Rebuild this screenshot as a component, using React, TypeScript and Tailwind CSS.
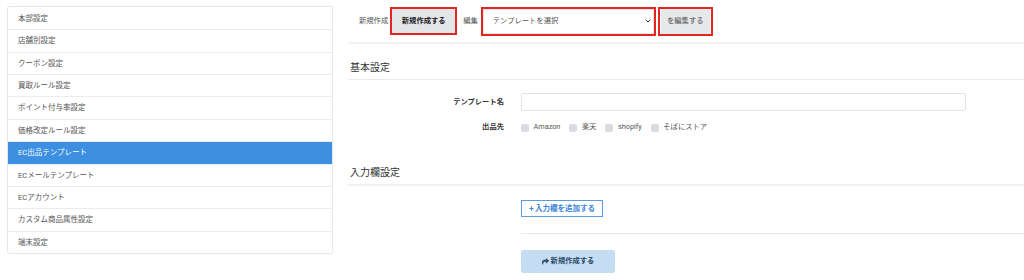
import React from 'react';
import { FaPlus, FaShare } from 'react-icons/fa';
import { ChevronDown } from 'lucide-react';

const menuItems = [
  '本部設定',
  '店舗別設定',
  'クーポン設定',
  '買取ルール設定',
  'ポイント付与率設定',
  '価格改定ルール設定',
  'EC出品テンプレート',
  'ECメールテンプレート',
  'ECアカウント',
  'カスタム商品属性設定',
  '端末設定',
];

const shops = ['Amazon', '楽天', 'shopify', 'そばにストア'];

export default function App() {
  return (
    <div className="flex w-[1024px] h-[280px] overflow-hidden bg-white font-['Roboto','Noto_Sans_CJK_JP',sans-serif] text-[#444]">
      {/* Settings menu */}
      <aside className="ml-[7px] mt-[6px] w-[326px] self-start border border-[#e6e8ec] rounded-[2px] overflow-hidden">
        {menuItems.map((item, idx) => (
          <div
            key={item}
            className={
              (idx > 0 ? 'border-t border-[#e9ebee] ' : '') +
              (item === 'EC出品テンプレート'
                ? 'bg-[#3c8fe1] text-white '
                : 'text-[#555] ') +
              'h-[22.36px] flex items-center pl-[10px] text-[7.5px]'
            }
          >
            {item}
          </div>
        ))}
      </aside>

      <main className="ml-[15px] flex-1 flex flex-col">
        {/* Toolbar */}
        <div className="h-[44px] border-b-2 border-[#f1f2f4] flex items-center pl-[11px] text-[7.3px]">
          <span className="text-[#555]">新規作成</span>
          <div className="ml-[2px] border-2 border-[#e3261f] w-[67px] h-[28px] flex">
            <button className="flex-1 bg-[#e3e5e9] font-bold text-[#222]">新規作成する</button>
          </div>
          <span className="ml-[6px] text-[#555]">編集</span>
          <div className="ml-[3px] border-2 border-[#e3261f] w-[175px] h-[29px] flex">
            <div className="flex-1 bg-white border border-[#e4e6ea] flex items-center justify-between pl-[9px] pr-[1px] text-[#555]">
              <span>テンプレートを選択</span>
              <ChevronDown size={8} strokeWidth={3} className="text-[#333]" />
            </div>
          </div>
          <div className="ml-[2px] border-2 border-[#e3261f] w-[55px] h-[29px] flex items-center px-[1px]">
            <button className="w-full h-[25px] bg-[#e6e8eb] text-[#666] font-medium">を編集する</button>
          </div>
        </div>

        {/* 基本設定 */}
        <h2 className="pt-[17px] pb-[4px] text-[10px] leading-[14px] text-[#333] border-b border-[#e8eaee] pl-[2px]">
          基本設定
        </h2>
        <div className="grid grid-cols-[156px_1fr] gap-x-[17px] items-center text-[7.3px] mt-[13px]">
          <label className="text-right font-bold text-[#333]">テンプレート名</label>
          <input className="w-[445px] h-[18px] border border-[#dfe2e7] rounded-[2px] bg-white" />
          <label className="text-right font-bold text-[#333] mt-[10.5px]">出品先</label>
          <div className="flex items-center mt-[10.5px] h-[12px] text-[#555]">
            {shops.map((shop) => (
              <span key={shop} className="flex items-center mr-[9px]">
                <span className="w-[8px] h-[8px] rounded-[2px] bg-[#d8dce1] mr-[4.5px]" />
                {shop}
              </span>
            ))}
          </div>
        </div>

        {/* 入力欄設定 */}
        <h2 className="mt-[32.5px] pb-[4px] text-[10px] leading-[14px] text-[#333] border-b-2 border-[#f0f1f3] pl-[2px]">
          入力欄設定
        </h2>
        <div className="pl-[173px]">
          <button className="mt-[14px] w-[82px] h-[17px] border border-[#5b9be0] bg-white text-[#3d86d8] font-bold text-[7.5px] flex items-center justify-center gap-[1px]">
            <FaPlus size={5} />
            入力欄を追加する
          </button>
          <div className="mt-[16px] border-t border-[#e6e8ec]" />
          <button className="mt-[16px] w-[94px] h-[23px] rounded-[2px] bg-[#c5ddf3] text-[#2b4a6c] font-bold text-[7.3px] flex items-center justify-center gap-[2px]">
            <FaShare size={7} />
            新規作成する
          </button>
        </div>
      </main>
    </div>
  );
}
